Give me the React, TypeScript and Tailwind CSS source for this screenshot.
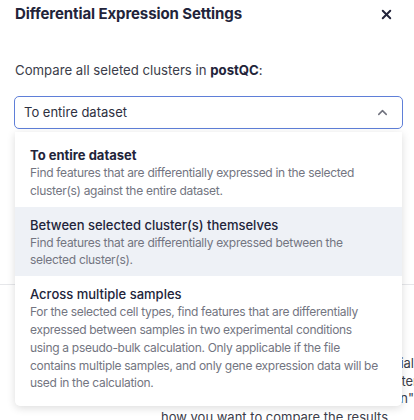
import { X, ChevronUp } from "lucide-react";

const options = [
    {
        title: "To entire dataset",
        desc: "Find features that are differentially expressed in the selected cluster(s) against the entire dataset.",
        selected: true,
        hovered: false
    },
    {
        title: "Between selected cluster(s) themselves",
        desc: "Find features that are differentially expressed between the selected cluster(s).",
        selected: false,
        hovered: true
    },
    {
        title: "Across multiple samples",
        desc: "For the selected cell types, find features that are differentially expressed between samples in two experimental conditions using a pseudo-bulk calculation. Only applicable if the file contains multiple samples, and only gene expression data will be used in the calculation.",
        selected: false,
        hovered: false
    }
];

export default function App() {
    return (
        <div className="relative w-[414px] h-[420px] overflow-hidden bg-white font-['Inter','Liberation_Sans',sans-serif] text-[#2a2c3a]">
            <div className="flex items-center justify-between pl-[15px] pr-[20px] pt-[4px] h-[24px]">
                <h2 className="text-[15px] font-bold tracking-[-0.1px] text-[#22243a]">
                    Differential Expression Settings
                </h2>
                <X size={15} strokeWidth={3.2} className="text-[#22243a]" />
            </div>

            <div className="px-[14px] pt-[36px]">
                <p className="text-[13.2px] leading-[20px] text-[#3b3d4a] pl-[1px]">
                    Compare all seleted clusters in <span className="font-bold text-[#22243a]">postQC</span>:
                </p>

                <div className="mt-[16px] h-[33px] w-[389px] flex items-center justify-between rounded-[5px] border-[1.5px] border-[#5f7fd8] pl-[9px] pr-[12px]">
                    <span className="text-[13px] text-[#2e3040]">To entire dataset</span>
                    <ChevronUp size={15} strokeWidth={2.4} className="text-[#70727e]" />
                </div>

                {/* content behind the open menu */}
                <div className="mt-[155px] border-t border-[#e6e7ea] -mx-[14px]" />
                <div className="mt-[70px] flex flex-col items-end -mr-[14px] text-[13px] leading-[17.5px] text-[#3b3d4a]">
                    <span>differential</span>
                    <span className="-mr-[4px]">cluster</span>
                    <span>in"</span>
                </div>
                <p className="mt-0 pl-[147px] whitespace-nowrap text-[13px] text-[#3b3d4a]">
                    how you want to compare the results
                </p>
            </div>

            <div className="absolute left-[15px] top-[132px] w-[387px] rounded-b-[5px] bg-white pt-[5px] shadow-[0_2px_8px_rgba(0,0,0,0.14)]">
                {options.map((o, i) => (
                    <div
                        key={o.title}
                        className={`pl-[15px] pr-[20px] pt-[9px] ${o.hovered ? "bg-[#eef1f6]" : ""} ${i === 2 ? "pb-[14px]" : "pb-[7px]"}`}
                    >
                        <p className={`text-[13px] leading-[18px] text-[#22243a] ${o.selected ? "font-bold" : "font-medium"}`}>
                            {o.title}
                        </p>
                        <p className="text-[12px] leading-[17.8px] tracking-[-0.3px] text-[#737581]">{o.desc}</p>
                    </div>
                ))}
            </div>
        </div>
    );
}
